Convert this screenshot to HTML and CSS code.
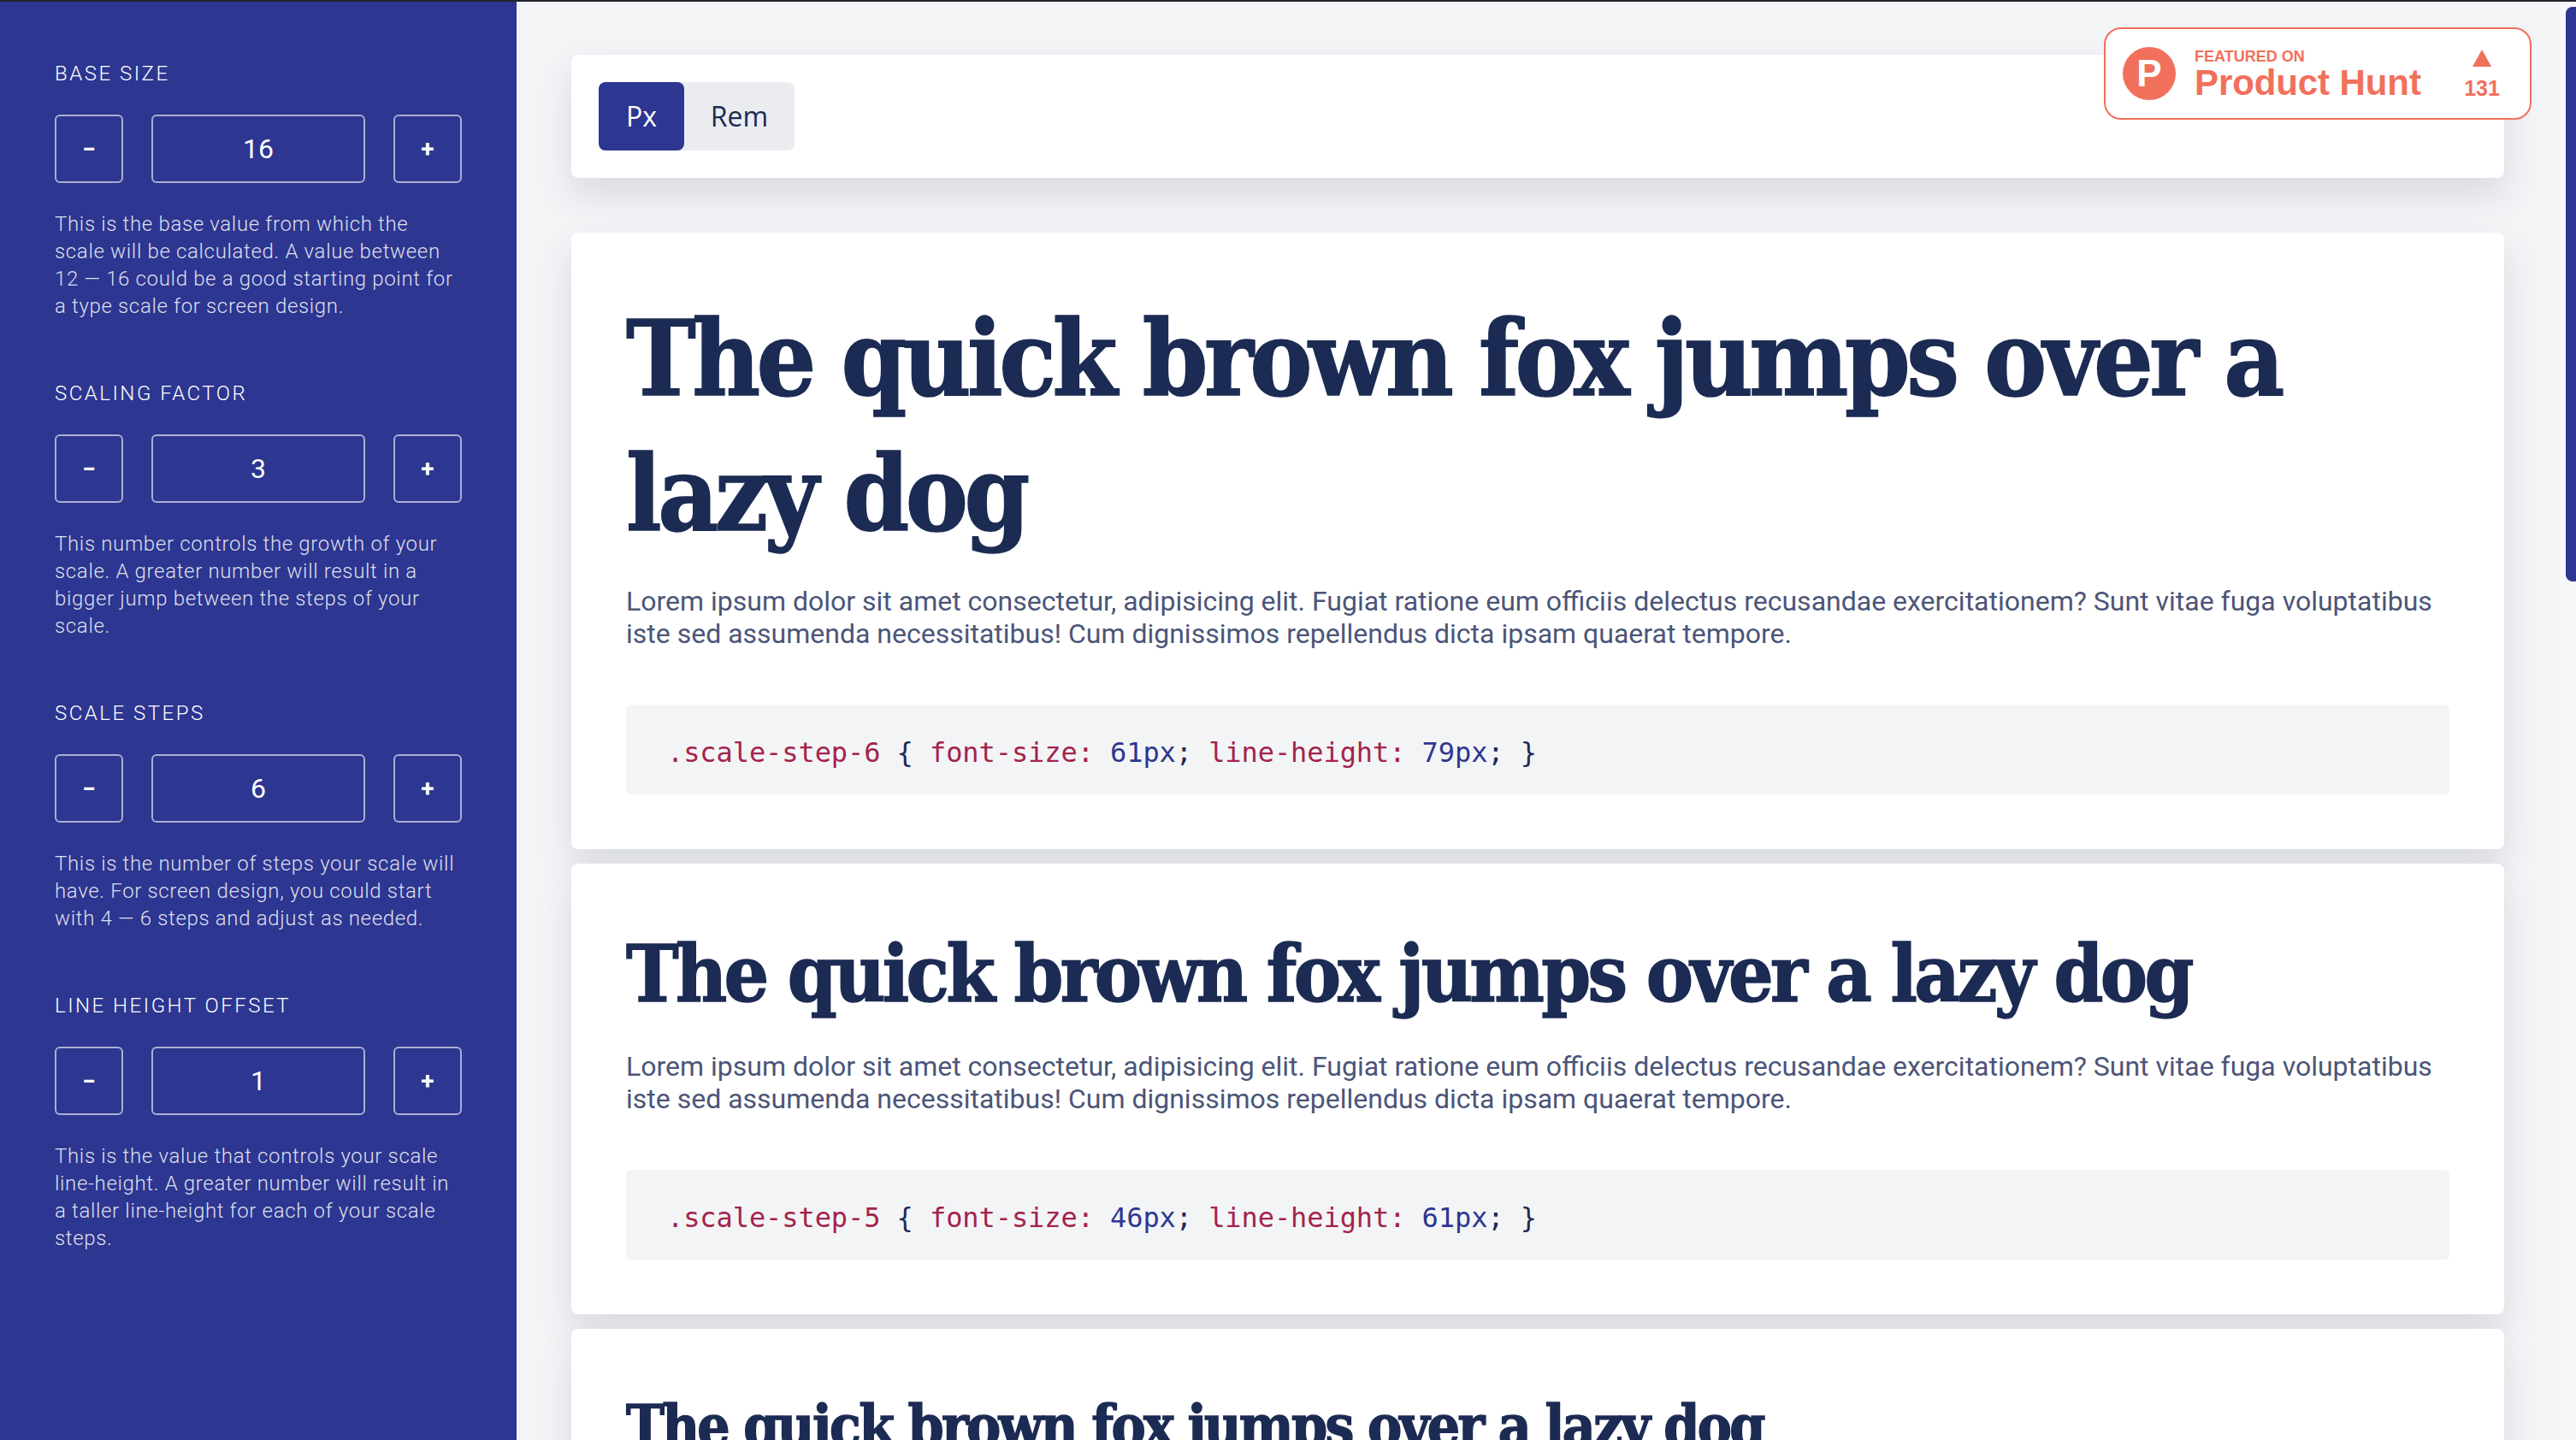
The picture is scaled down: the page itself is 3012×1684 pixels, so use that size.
FILE: index.html
```html
<!DOCTYPE html>
<html lang="en">
<head>
    <meta charset="UTF-8">
    <title>Type Scale</title>
    <link rel="stylesheet" href="styles.css">
</head>
<body>
    <aside class="sidebar">
        <section class="control">
            <h2 class="label">Base size</h2>
            <div class="stepper">
                <button type="button" class="step-btn">&minus;</button>
                <div class="step-value">16</div>
                <button type="button" class="step-btn">+</button>
            </div>
            <p class="hint">This is the base value from which the scale will be calculated. A value between 12 — 16 could be a good starting point for a type scale for screen design.</p>
        </section>
        <section class="control">
            <h2 class="label">Scaling factor</h2>
            <div class="stepper">
                <button type="button" class="step-btn">&minus;</button>
                <div class="step-value">3</div>
                <button type="button" class="step-btn">+</button>
            </div>
            <p class="hint">This number controls the growth of your scale. A greater number will result in a bigger jump between the steps of your scale.</p>
        </section>
        <section class="control">
            <h2 class="label">Scale steps</h2>
            <div class="stepper">
                <button type="button" class="step-btn">&minus;</button>
                <div class="step-value">6</div>
                <button type="button" class="step-btn">+</button>
            </div>
            <p class="hint">This is the number of steps your scale will have. For screen design, you could start with 4 — 6 steps and adjust as needed.</p>
        </section>
        <section class="control">
            <h2 class="label">Line height offset</h2>
            <div class="stepper">
                <button type="button" class="step-btn">&minus;</button>
                <div class="step-value">1</div>
                <button type="button" class="step-btn">+</button>
            </div>
            <p class="hint">This is the value that controls your scale line-height. A greater number will result in a taller line-height for each of your scale steps.</p>
        </section>
    </aside>

    <main class="main">
        <div class="card toolbar">
            <div class="toggle">
                <button type="button" class="toggle-btn active">Px</button>
                <button type="button" class="toggle-btn">Rem</button>
            </div>
        </div>

        <article class="card sample">
            <h1 class="step-6">The quick brown fox jumps over a lazy dog</h1>
            <p class="lorem">Lorem ipsum dolor sit amet consectetur, adipisicing elit. Fugiat ratione eum officiis delectus recusandae exercitationem? Sunt vitae fuga voluptatibus iste sed assumenda necessitatibus! Cum dignissimos repellendus dicta ipsam quaerat tempore.</p>
            <pre class="code"><span class="red">.scale-step-6</span> { <span class="red">font-size:</span> <span class="blue">61px</span>; <span class="red">line-height:</span> <span class="blue">79px</span>; }</pre>
        </article>

        <article class="card sample">
            <h1 class="step-5">The quick brown fox jumps over a lazy dog</h1>
            <p class="lorem">Lorem ipsum dolor sit amet consectetur, adipisicing elit. Fugiat ratione eum officiis delectus recusandae exercitationem? Sunt vitae fuga voluptatibus iste sed assumenda necessitatibus! Cum dignissimos repellendus dicta ipsam quaerat tempore.</p>
            <pre class="code"><span class="red">.scale-step-5</span> { <span class="red">font-size:</span> <span class="blue">46px</span>; <span class="red">line-height:</span> <span class="blue">61px</span>; }</pre>
        </article>

        <article class="card sample">
            <h1 class="step-4">The quick brown fox jumps over a lazy dog</h1>
        </article>
    </main>

    <a class="badge" href="#">
        <span class="badge-logo">P</span>
        <span class="badge-text">
            <span class="badge-small">FEATURED ON</span>
            <span class="badge-name">Product Hunt</span>
        </span>
        <span class="badge-votes">
            <span class="badge-arrow"></span>
            <span class="badge-count">131</span>
        </span>
    </a>

    <div class="scroll-track"><div class="scroll-thumb"></div></div>
</body>
</html>
```

FILE: styles.css
```css
* {
    box-sizing: border-box;
    margin: 0;
    padding: 0;
}

html, body {
    height: 1684px;
    overflow: hidden;
}

body {
    display: flex;
    font-family: Roboto, sans-serif;
    background-color: #f3f4f6;
    border-top: 2px solid #23242c;
    color: #1c2b53;
}

.sidebar {
    flex: 0 0 604px;
    padding: 62px 64px 0;
    background-color: #2d3690;
    color: #fff;
}

.control {
    margin-bottom: 64px;
}

.label {
    margin-bottom: 26px;
    font-size: 24px;
    line-height: 44px;
    font-weight: 300;
    letter-spacing: 2.5px;
    text-transform: uppercase;
}

.stepper {
    display: flex;
    column-gap: 33px;
    height: 80px;
    margin-bottom: 32px;
}

.step-btn, .step-value {
    border: 2px solid rgba(255, 255, 255, 0.6);
    border-radius: 6px;
    color: #fff;
    background: none;
    font-family: Roboto, sans-serif;
}

.step-btn {
    flex: 0 0 80px;
    font-size: 28px;
    font-weight: 700;
}

.step-value {
    flex: 1;
    display: flex;
    align-items: center;
    justify-content: center;
    font-size: 32px;
}

.hint {
    max-width: 472px;
    font-size: 24px;
    line-height: 32px;
    font-weight: 300;
    letter-spacing: 0.66px;
    color: rgba(255, 255, 255, 0.85);
}

.main {
    flex: 1;
    padding: 62px 84px 0 64px;
}

.card {
    background-color: #fff;
    border-radius: 8px;
    box-shadow: 0 20px 40px rgba(45, 54, 100, 0.13);
}

.toolbar {
    padding: 32px;
    height: 144px;
    margin-bottom: 64px;
}

.toggle {
    display: inline-flex;
    height: 80px;
    background-color: #ebecf0;
    border-radius: 8px;
}

.toggle-btn {
    width: 129px;
    padding-bottom: 2px;
    border: 0;
    border-radius: 8px;
    background: none;
    font-family: "Open Sans", sans-serif;
    font-size: 32px;
    color: #1c2b53;
}

.toggle-btn.active {
    width: 100px;
    background-color: #2d3690;
    color: #fff;
}

.sample {
    padding: 68px 64px 64px;
    margin-bottom: 17px;
}

h1 {
    font-family: "DejaVu Serif", serif;
    font-stretch: condensed;
    font-weight: 700;
    -webkit-text-stroke: 1.5px #1c2b53;
}

.step-6 {
    font-size: 122px;
    line-height: 158px;
    letter-spacing: -0.037em;
    margin-bottom: 28px;
}

.step-5 {
    font-size: 92px;
    line-height: 122px;
    letter-spacing: -0.039em;
    margin-bottom: 28px;
}

.step-4 {
    font-size: 67px;
    line-height: 92px;
    letter-spacing: -0.04em;
}

.lorem {
    font-size: 32px;
    line-height: 38px;
    color: #4b5578;
}

.code {
    margin-top: 64px;
    padding: 36px 48px 0;
    height: 105px;
    border-radius: 6px;
    background-color: #f3f4f6;
    font-family: "DejaVu Sans Mono", monospace;
    font-size: 32px;
    line-height: 41px;
    letter-spacing: -0.08px;
    color: #1c2b53;
}

.red {
    color: #a3234c;
}

.blue {
    color: #2d3690;
}

.badge {
    position: absolute;
    top: 32px;
    left: 2460px;
    width: 500px;
    height: 108px;
    display: flex;
    align-items: center;
    padding: 0 20px;
    border: 2px solid #f1705c;
    border-radius: 20px;
    background-color: #fff;
    color: #f1705c;
    font-family: "Liberation Sans", sans-serif;
    font-weight: 700;
    text-decoration: none;
}

.badge-logo {
    flex: 0 0 62px;
    height: 62px;
    margin-right: 22px;
    border-radius: 50%;
    background-color: #f1705c;
    color: #fff;
    font-size: 44px;
    line-height: 62px;
    text-align: center;
}

.badge-text {
    display: flex;
    flex-direction: column;
    width: 316px;
    padding-top: 4px;
}

.badge-small {
    font-size: 18px;
    line-height: 18px;
}

.badge-name {
    font-size: 42px;
    line-height: 44px;
    letter-spacing: -0.1px;
}

.badge-votes {
    display: flex;
    flex-direction: column;
    align-items: center;
    row-gap: 14px;
    width: 40px;
}

.badge-arrow {
    width: 0;
    height: 0;
    border-left: 11px solid transparent;
    border-right: 11px solid transparent;
    border-bottom: 20px solid #f1705c;
}

.badge-count {
    font-size: 25px;
    line-height: 22px;
}

.scroll-track {
    position: absolute;
    top: 2px;
    right: 0;
    width: 20px;
    height: 1682px;
    padding: 6px 0 0 8px;
    background-color: #f7f7f9;
}

.scroll-thumb {
    height: 672px;
    background-color: #2d3690;
    border-radius: 8px 0 0 8px;
}
```
